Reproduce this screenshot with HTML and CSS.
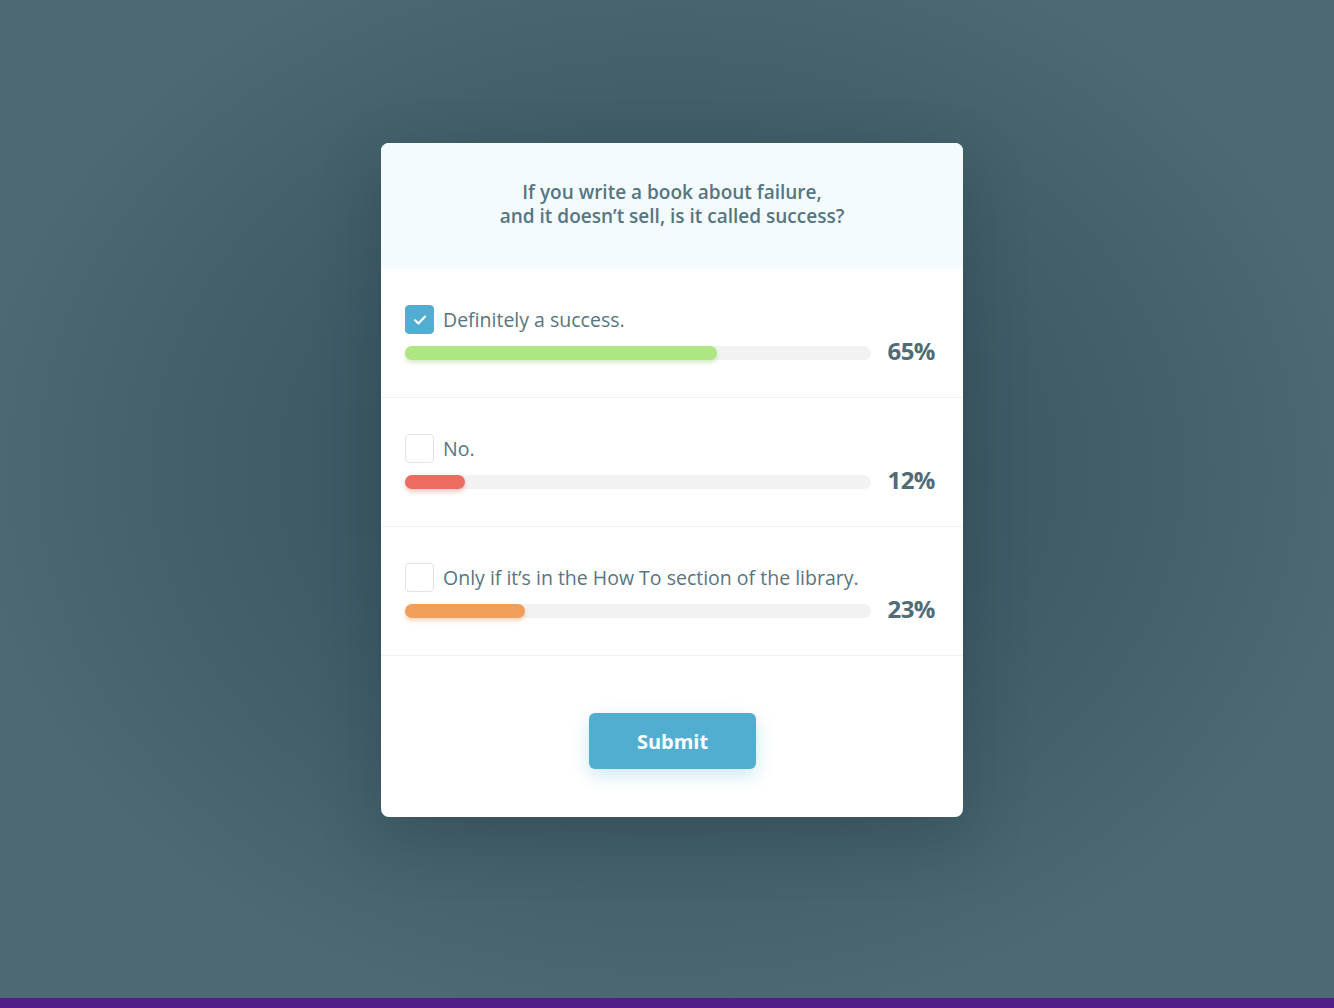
FILE: index.html
```html
<!DOCTYPE html>
<html>
<head>
<meta charset="utf-8">
<link rel="stylesheet" href="styles.css">
</head>
<body>
<div class="stage">
  <div class="card">
    <div class="question">If you write a book about failure,<br>and it doesn’t sell, is it called success?</div>
    <div class="option">
      <div class="label"><span class="box checked"><svg width="16" height="16" viewBox="0 0 16 16"><path d="M3 8.3 L6.4 11.4 L13 4.6" fill="none" stroke="#fff" stroke-width="2.2" stroke-linecap="round" stroke-linejoin="round"/></svg></span>Definitely a success.</div>
      <div class="result"><div class="track"><div class="fill green" style="width:312px"></div></div><span class="pct">65%</span></div>
    </div>
    <div class="option">
      <div class="label"><span class="box"></span>No.</div>
      <div class="result"><div class="track"><div class="fill red" style="width:60px"></div></div><span class="pct">12%</span></div>
    </div>
    <div class="option">
      <div class="label"><span class="box"></span>Only if it’s in the How To section of the library.</div>
      <div class="result"><div class="track"><div class="fill orange" style="width:120px"></div></div><span class="pct">23%</span></div>
    </div>
    <div class="footer"><button class="submit">Submit</button></div>
  </div>
</div>
<div class="bottombar"></div>
</body>
</html>
```
FILE: styles.css
```css
html, body { margin: 0; padding: 0; }
body {
  width: 1334px;
  height: 1008px;
  overflow: hidden;
  display: flex;
  flex-direction: column;
  font-family: "Open Sans", "Noto Sans", sans-serif;
  background: radial-gradient(ellipse 700px 560px at 667px 470px, #2f4c57 0%, #3c5964 45%, #4d6973 100%);
}
.stage {
  flex: 1;
  display: flex;
  justify-content: center;
  padding: 143px 0 0 10px;
}
.card {
  width: 582px;
  height: 674px;
  background: #fff;
  border-radius: 8px;
  overflow: hidden;
  display: flex;
  flex-direction: column;
  box-shadow: 0 20px 60px rgba(20, 40, 50, 0.25);
}
.question {
  height: 126px;
  box-sizing: border-box;
  background: #f3fbfe;
  color: #577580;
  font-weight: 600;
  font-size: 19px;
  line-height: 24px;
  text-align: center;
  padding-top: 37px;
}
.option {
  height: 129px;
  box-sizing: border-box;
  padding: 36px 28px 0 24px;
  border-bottom: 1px solid #f1f3f4;
}
.label {
  display: flex;
  align-items: center;
  gap: 9px;
  color: #587580;
  font-size: 19.5px;
  height: 29px;
}
.box {
  width: 29px;
  height: 29px;
  box-sizing: border-box;
  border: 1px solid #dfe3e5;
  border-radius: 4px;
  display: flex;
  align-items: center;
  justify-content: center;
  flex: none;
}
.box.checked {
  background: #52aed1;
  border-color: #52aed1;
}
.result {
  display: flex;
  align-items: center;
  margin-top: 12px;
  height: 14px;
}
.track {
  width: 466px;
  height: 14px;
  border-radius: 7px;
  background: #f2f2f2;
  flex: none;
}
.fill {
  height: 14px;
  border-radius: 7px;
}
.green { background: #aee782; box-shadow: 0 3px 4px rgba(140, 200, 100, 0.35); }
.red { background: #ee6b60; box-shadow: 0 3px 4px rgba(230, 100, 90, 0.35); }
.orange { background: #f29e5b; box-shadow: 0 3px 4px rgba(240, 150, 80, 0.35); }
.pct {
  margin-left: auto;
  margin-top: -5px;
  font-weight: 700;
  font-size: 24px;
  line-height: 24px;
  color: #4f6c77;
  letter-spacing: -0.5px;
}
.footer {
  flex: 1;
  display: flex;
  justify-content: center;
  padding-top: 57px;
  padding-left: 1px;
}
.submit {
  width: 167px;
  height: 56px;
  border: none;
  border-radius: 6px;
  background: #52aed1;
  color: #fff;
  font-family: "Open Sans", sans-serif;
  font-weight: 700;
  font-size: 20px;
  box-shadow: 0 6px 18px rgba(82, 174, 209, 0.3);
}
.bottombar {
  height: 10px;
  background: #521c89;
  flex: none;
}
```
